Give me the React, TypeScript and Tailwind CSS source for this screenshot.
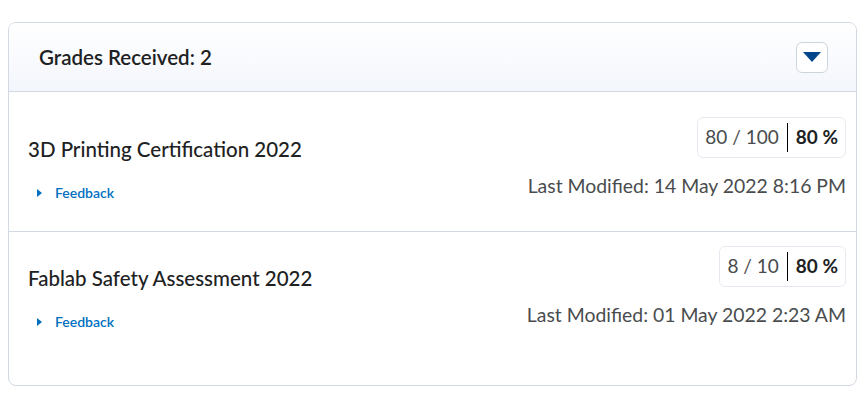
type Grade = {
  title: string;
  score: string;
  percent: string;
  modified: string;
};

const grades: Grade[] = [
  {
    title: "3D Printing Certification 2022",
    score: "80 / 100",
    percent: "80 %",
    modified: "Last Modified: 14 May 2022 8:16 PM",
  },
  {
    title: "Fablab Safety Assessment 2022",
    score: "8 / 10",
    percent: "80 %",
    modified: "Last Modified: 01 May 2022 2:23 AM",
  },
];

function FeedbackLink() {
  return (
    <button type="button" className="flex items-center text-[14px] leading-[18px] font-semibold text-[#006fbf]">
      <svg width="5" height="8" viewBox="0 0 5 8" className="ml-[9px] mr-[13px]">
        <path d="M0 0 L5 4 L0 8 Z" fill="#006fbf" />
      </svg>
      Feedback
    </button>
  );
}

function GradeRow({ grade, first }: { grade: Grade; first: boolean }) {
  return (
    <div
      className={
        first
          ? "flex justify-between pl-[19px] pr-[10px] pt-[25px] pb-[29px] border-b border-[#d3d9e3]"
          : "flex justify-between pl-[19px] pr-[10px] pt-[14px] pb-[54px]"
      }
    >
      <div className="flex flex-col pt-[18px]">
        <h3 className="text-[20.5px] leading-[28px] font-medium text-[#202122]">{grade.title}</h3>
        <div className="mt-[21px]">
          <FeedbackLink />
        </div>
      </div>
      <div className="flex flex-col items-end">
        <div className="flex items-center h-[41px] px-[7px] rounded-[6px] border border-[#e6eaf0] text-[19px] text-[#494c4e]">
          <span>{grade.score}</span>
          <span className="mx-[8px] w-px h-[29px] bg-black" />
          <span className="font-bold text-[#202122]">{grade.percent}</span>
        </div>
        <div className="mt-[17px] text-[19.4px] leading-[22px] text-[#494c4e]">{grade.modified}</div>
      </div>
    </div>
  );
}

export default function App() {
  return (
    <div className="min-h-screen bg-white px-[8px] pt-[22px]" style={{ fontFamily: "Lato, 'Open Sans', sans-serif" }}>
      <div className="rounded-[8px] border border-[#d3d9e3] overflow-hidden">
        <div className="flex items-center justify-between h-[69px] pl-[30px] pr-[28px] border-b border-[#d3d9e3] bg-gradient-to-b from-white to-[#f3f6fc]">
          <h2 className="text-[20.5px] leading-[24px] font-semibold text-[#202122]">Grades Received: 2</h2>
          <button
            type="button"
            className="flex items-center justify-center w-[32px] h-[31px] rounded-[6px] border border-[#cdd5dc] bg-white"
          >
            <svg width="18" height="10" viewBox="0 0 18 10">
              <path d="M0 0 H18 L9 10 Z" fill="#004489" />
            </svg>
          </button>
        </div>
        {grades.map((g, i) => (
          <GradeRow key={g.title} grade={g} first={i === 0} />
        ))}
      </div>
    </div>
  );
}
